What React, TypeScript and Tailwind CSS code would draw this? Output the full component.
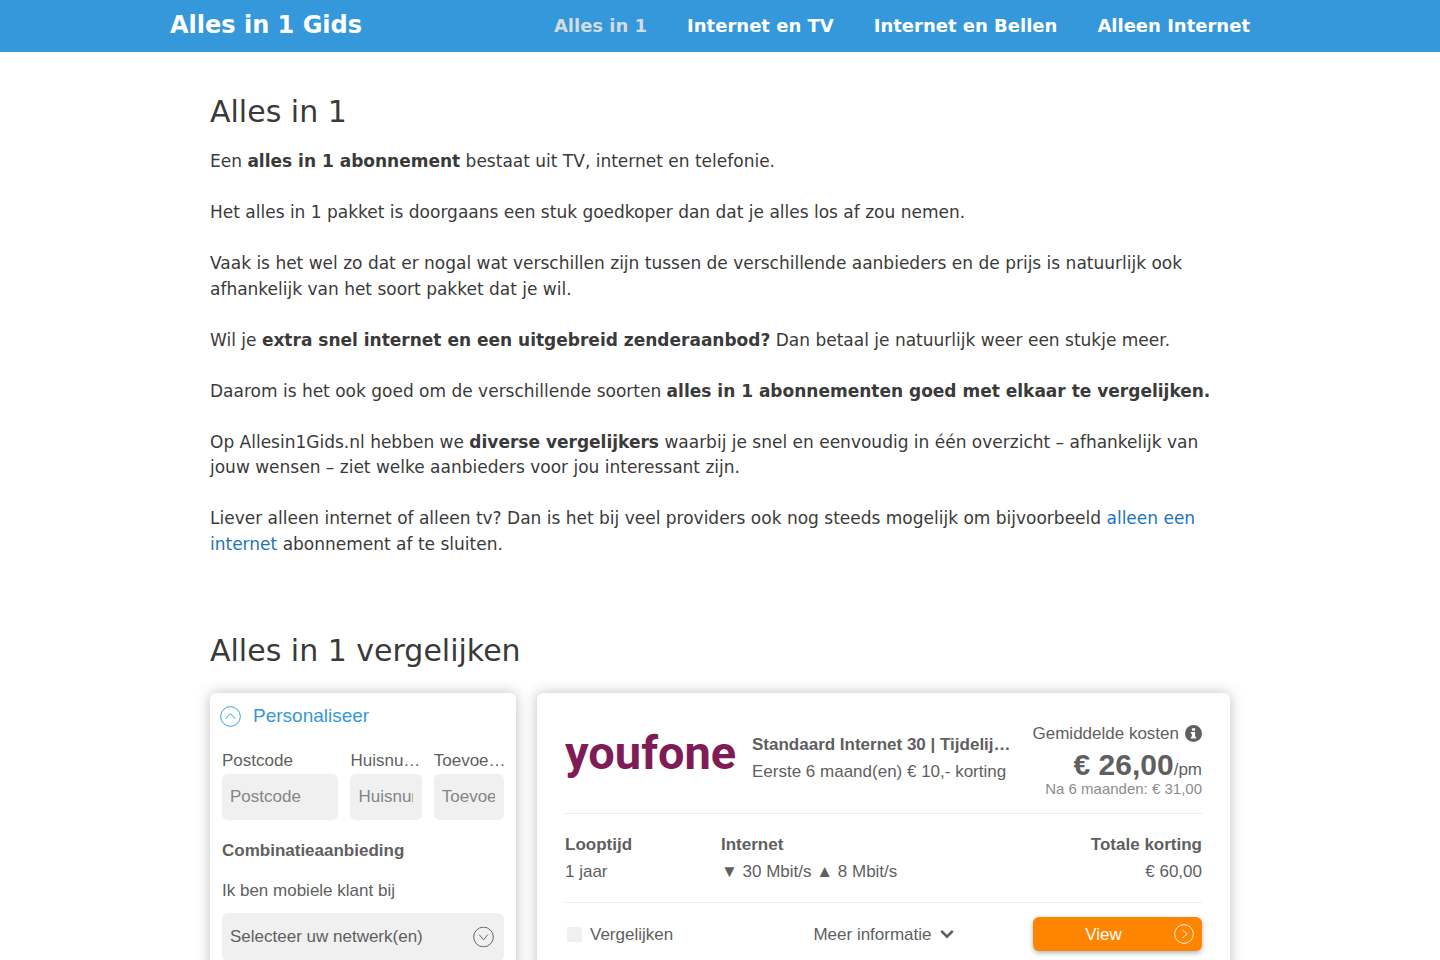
import React, { useState } from 'react';

const navItems = ['Alles in 1', 'Internet en TV', 'Internet en Bellen', 'Alleen Internet'];

const addressFields = [
  { id: 'postcode', label: 'Postcode' },
  { id: 'huisnummer', label: 'Huisnummer' },
  { id: 'toevoeging', label: 'Toevoeging' },
];

type ArrowProps = {
  direction: 'up' | 'down' | 'right';
  className?: string;
};

const arrows = {
  up: 'M6 13.5 L11 8 L16 13.5',
  down: 'M6.5 8.5 L11 14 L15.5 8.5',
  right: 'M9 6.5 L14.5 11 L9 15.5',
};

const CircleArrow = ({ direction, className }: ArrowProps) => (
  <svg viewBox="0 0 22 22" fill="none" stroke="currentColor" className={className} aria-hidden="true">
    <circle cx="11" cy="11" r="10.3" />
    <path d={arrows[direction]} />
  </svg>
);

const Header = () => {
  const [active, setActive] = useState('Alles in 1');

  return (
    <header className="bg-[#3498db]">
      <div className="max-w-[1100px] h-[52px] mx-auto pr-5 flex items-center justify-between font-bold text-white">
        <a href="#" className="text-2xl pb-0.5">
          Alles in 1 Gids
        </a>
        <nav className="flex gap-10 text-lg">
          {navItems.map((item) => (
            <a
              key={item}
              href="#"
              className={active === item ? 'text-[#d3dce3]' : 'text-white'}
              onClick={(e) => {
                e.preventDefault();
                setActive(item);
              }}
            >
              {item}
            </a>
          ))}
        </nav>
      </div>
    </header>
  );
};

const Intro = () => (
  <section>
    <h1 className="text-3xl leading-9 mb-[19px]">Alles in 1</h1>
    <div className="text-[17px] leading-[1.5] [&>p]:mb-[1.5em]">
      <p>
        Een <strong>alles in 1 abonnement</strong> bestaat uit TV, internet en telefonie.
      </p>
      <p>Het alles in 1 pakket is doorgaans een stuk goedkoper dan dat je alles los af zou nemen.</p>
      <p>
        Vaak is het wel zo dat er nogal wat verschillen zijn tussen de verschillende aanbieders en de prijs is
        natuurlijk ook afhankelijk van het soort pakket dat je wil.
      </p>
      <p>
        Wil je <strong>extra snel internet en een uitgebreid zenderaanbod?</strong> Dan betaal je natuurlijk weer een
        stukje meer.
      </p>
      <p>
        Daarom is het ook goed om de verschillende soorten{' '}
        <strong>alles in 1 abonnementen goed met elkaar te vergelijken.</strong>
      </p>
      <p>
        Op Allesin1Gids.nl hebben we <strong>diverse vergelijkers</strong> waarbij je snel en eenvoudig in één
        overzicht – afhankelijk van jouw wensen – ziet welke aanbieders voor jou interessant zijn.
      </p>
      <p>
        Liever alleen internet of alleen tv? Dan is het bij veel providers ook nog steeds mogelijk om bijvoorbeeld{' '}
        <a href="#" className="text-[#1e73be]">
          alleen een internet
        </a>{' '}
        abonnement af te sluiten.
      </p>
    </div>
  </section>
);

const Filters = () => {
  const [open, setOpen] = useState(true);

  return (
    <aside className="w-[30%] shrink-0 bg-white rounded-md shadow-[0_0_14px_rgba(0,0,0,0.25)] pb-6">
      <button
        type="button"
        className="flex items-center gap-3 px-2.5 h-[46px] text-[19px] text-[#3498db]"
        onClick={() => setOpen(!open)}
      >
        <CircleArrow direction={open ? 'up' : 'down'} className="size-[21px]" />
        Personaliseer
      </button>
      {open && (
        <div className="px-3 pt-2">
          <div className="grid grid-cols-[116fr_71fr_70fr] gap-3">
            {addressFields.map(({ id, label }) => (
              <div key={id} className="min-w-0">
                <label htmlFor={id} className="block truncate -mr-1 leading-[27px]">
                  {label}
                </label>
                <input
                  id={id}
                  type="text"
                  placeholder={label}
                  className="w-full h-[46px] pl-2 pr-[9px] rounded-md bg-[#f0f0f0] placeholder:text-[#858585]"
                />
              </div>
            ))}
          </div>
          <h3 className="font-bold leading-[27px] mt-[17px]">Combinatieaanbieding</h3>
          <label htmlFor="netwerk" className="block leading-[27px] mt-[13px] mb-[9px]">
            Ik ben mobiele klant bij
          </label>
          <div className="relative">
            <select id="netwerk" className="appearance-none w-full h-[48px] px-2 rounded-md bg-[#f0f0f0]">
              <option>Selecteer uw netwerk(en)</option>
            </select>
            <CircleArrow
              direction="down"
              className="absolute right-2.5 top-1/2 -translate-y-1/2 size-[21px] pointer-events-none"
            />
          </div>
        </div>
      )}
    </aside>
  );
};

const Offer = () => (
  <article className="flex-1 min-w-0 bg-white rounded-md shadow-[0_0_14px_rgba(0,0,0,0.25)] px-7 pb-6 leading-[27px]">
    <div className="flex items-center h-[121px] border-b border-[#ececec]">
      <svg
        viewBox="0 0 170 60"
        className="w-[170px] h-[60px] shrink-0 overflow-visible"
        role="img"
        aria-label="youfone"
      >
        <text x="0" y="46" fill="#7f1c57" className="font-['Roboto',sans-serif] font-bold text-[47px]">
          youfone
        </text>
      </svg>
      <div className="flex-1 min-w-0 ml-[17px] mr-5 pt-2.5">
        <h3 className="font-bold truncate">Standaard Internet 30 | Tijdelijk voordeel</h3>
        <p>Eerste 6 maand(en) € 10,- korting</p>
      </div>
      <div className="w-[169px] shrink-0 pt-2.5 text-right whitespace-nowrap">
        <p className="flex items-center justify-end gap-1.5">
          Gemiddelde kosten
          <svg viewBox="0 0 512 512" className="size-[17px] shrink-0" aria-hidden="true">
            <circle cx="256" cy="256" r="256" fill="currentColor" />
            <path
              fill="white"
              d="M176 208h128v144h32v56H176v-56h32v-88h-32zM208 96h96v80h-96z"
            />
          </svg>
        </p>
        <p className="flex items-baseline justify-end mt-[3px]">
          <strong className="text-3xl leading-[30px]">€ 26,00</strong>
          <span className="leading-none">/pm</span>
        </p>
        <p className="mt-px text-[15px] leading-4 text-[#8c8c8c]">Na 6 maanden: € 31,00</p>
      </div>
    </div>
    <dl className="flex justify-between h-[89px] pt-[17px] border-b border-[#ececec]">
      <div className="w-[156px]">
        <dt className="font-bold">Looptijd</dt>
        <dd>1 jaar</dd>
      </div>
      <div className="flex-1">
        <dt className="font-bold">Internet</dt>
        <dd>▼ 30 Mbit/s ▲ 8 Mbit/s</dd>
      </div>
      <div className="text-right">
        <dt className="font-bold">Totale korting</dt>
        <dd>€ 60,00</dd>
      </div>
    </dl>
    <div className="grid grid-cols-[169px_1fr_169px] items-center pt-3.5">
      <label className="flex items-center gap-2">
        <input type="checkbox" className="appearance-none size-[15px] ml-0.5 bg-[#f0f0f0] checked:bg-[#3498db]" />
        Vergelijken
      </label>
      <button type="button" className="flex items-center justify-center gap-2">
        Meer informatie
        <svg viewBox="0 0 14 10" fill="none" stroke="currentColor" strokeWidth="2.6" className="w-3.5 h-2.5">
          <path d="M1.2 1.8 L7 7.6 L12.8 1.8" />
        </svg>
      </button>
      <a
        href="#"
        className="flex items-center h-[34px] pr-2 rounded-md bg-[#ff8400] text-white shadow-[0_2px_5px_rgba(0,0,0,0.3)]"
      >
        <span className="flex-1 text-center">View</span>
        <CircleArrow direction="right" className="size-5" />
      </a>
    </div>
  </article>
);

const App = () => {
  return (
    <div className="min-h-screen bg-white font-['DejaVu_Sans',sans-serif] text-[#3a3a3a]">
      <Header />
      <main className="max-w-[1100px] mx-auto px-10 pt-[42px] pb-10">
        <Intro />
        <h2 className="text-3xl leading-9 mt-[76px] mb-6">Alles in 1 vergelijken</h2>
        <div className="flex items-start gap-[21px] font-['Liberation_Sans',sans-serif] text-[17px] text-[#5f5f5f]">
          <Filters />
          <Offer />
        </div>
      </main>
    </div>
  );
};

export default App;
